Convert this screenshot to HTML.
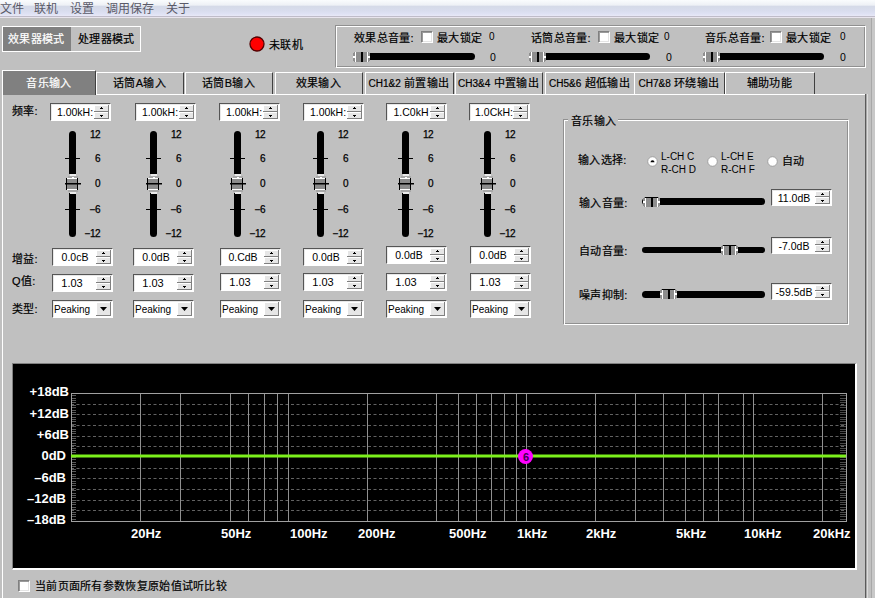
<!DOCTYPE html>
<html lang="zh-CN"><head><meta charset="utf-8"><title>EQ</title>
<style>
html,body{margin:0;padding:0;}
body{width:875px;height:598px;overflow:hidden;position:relative;background:#c0c0c0;font-family:"Liberation Sans",sans-serif;}
body>div,body>svg{position:absolute;}
.cj{font-size:11px;letter-spacing:0.3px;white-space:nowrap;line-height:13px;color:#000;-webkit-text-stroke:0.2px currentColor;}
.tab{text-align:center;}
.num{font-size:11px;white-space:nowrap;color:#000;}
.sm{font-size:10px;line-height:12px;}
.sc{font-size:10px;text-align:right;color:#000;line-height:12px;letter-spacing:-0.6px;-webkit-text-stroke:0.25px #000;}
.ch{font-size:13px;font-weight:bold;color:#fff;white-space:nowrap;line-height:15px;}
</style></head><body>
<div style="left:0px;top:0px;width:875px;height:16px;background:linear-gradient(#fafcfd 0px,#eef1f6 5px,#d5dae8 6.5px,#d9ddee 11px,#dfe2f4 14px,#e8e9f7 16px);"></div>
<div style="left:0px;top:16px;width:875px;height:1px;background:#bfbcc9;"></div>
<div style="left:0px;top:17px;width:875px;height:1px;background:#e9e5ee;"></div>
<div class="cj" style="left:0px;top:3px;font-size:12px;color:#5a5a68;letter-spacing:0;-webkit-text-stroke:0;">文件</div>
<div class="cj" style="left:34px;top:3px;font-size:12px;color:#5a5a68;letter-spacing:0;-webkit-text-stroke:0;">联机</div>
<div class="cj" style="left:70px;top:3px;font-size:12px;color:#5a5a68;letter-spacing:0;-webkit-text-stroke:0;">设置</div>
<div class="cj" style="left:106px;top:3px;font-size:12px;color:#5a5a68;letter-spacing:0;-webkit-text-stroke:0;">调用保存</div>
<div class="cj" style="left:166px;top:3px;font-size:12px;color:#5a5a68;letter-spacing:0;-webkit-text-stroke:0;">关于</div>
<div style="left:2px;top:26px;width:139px;height:26px;border:1px solid #fff;box-sizing:border-box;"></div>
<div style="left:3px;top:27px;width:68px;height:24px;background:#808080;"></div>
<div class="cj" style="left:8px;top:33px;font-size:11px;color:#fff;">效果器模式</div>
<div class="cj" style="left:78px;top:33px;font-size:11px;color:#000;">处理器模式</div>
<svg style="left:249px;top:36px" width="16" height="16"><circle cx="8" cy="8" r="7" fill="#ff0000" stroke="#500" stroke-width="1.3"/></svg>
<div class="cj" style="left:269px;top:39px;font-size:11px;color:#000;">未联机</div>
<div style="left:335px;top:25px;width:530px;height:42px;border:1px solid #909090;box-sizing:border-box;"></div>
<div style="left:336px;top:26px;width:530px;height:42px;border:1px solid #fff;box-sizing:border-box;"></div>
<div class="cj" style="left:354px;top:32px;font-size:11px;color:#000;">效果总音量:</div>
<div style="left:421px;top:31px;width:12px;height:12px;background:#fff;border-top:1px solid #808080;border-left:1px solid #808080;border-bottom:1px solid #fff;border-right:1px solid #fff;box-sizing:border-box;box-shadow:inset 1px 1px 0 #9a9a9a, inset -1px -1px 0 #e4e4e4;"></div>
<div class="cj" style="left:437px;top:32px;font-size:11px;color:#000;">最大锁定</div>
<div class="num" style="left:489px;top:31px;font-size:10px;line-height:12px">0</div>
<div style="left:364px;top:53px;width:111px;height:7px;background:#000;border-radius:3.5px;"></div>
<svg style="left:353px;top:52px" width="17" height="10">
<rect x="0" y="1" width="17" height="8" fill="#8e8e8e"/>
<rect x="1" y="0" width="15" height="10" fill="#8e8e8e"/>
<rect x="2" y="0" width="1" height="10" fill="#fff"/>
<rect x="14" y="0" width="1" height="10" fill="#fff"/>
<rect x="0" y="4" width="2" height="2" fill="#fff"/>
<rect x="15" y="4" width="2" height="2" fill="#fff"/>

<rect x="8" y="0" width="2" height="10" fill="#000"/>
</svg>
<div class="num" style="left:490px;top:51px;font-size:10.5px;line-height:12px">0</div>
<div class="cj" style="left:531px;top:32px;font-size:11px;color:#000;">话筒总音量:</div>
<div style="left:598px;top:31px;width:12px;height:12px;background:#fff;border-top:1px solid #808080;border-left:1px solid #808080;border-bottom:1px solid #fff;border-right:1px solid #fff;box-sizing:border-box;box-shadow:inset 1px 1px 0 #9a9a9a, inset -1px -1px 0 #e4e4e4;"></div>
<div class="cj" style="left:614px;top:32px;font-size:11px;color:#000;">最大锁定</div>
<div class="num" style="left:664px;top:31px;font-size:10px;line-height:12px">0</div>
<div style="left:540px;top:53px;width:110px;height:7px;background:#000;border-radius:3.5px;"></div>
<svg style="left:529px;top:52px" width="17" height="10">
<rect x="0" y="1" width="17" height="8" fill="#8e8e8e"/>
<rect x="1" y="0" width="15" height="10" fill="#8e8e8e"/>
<rect x="2" y="0" width="1" height="10" fill="#fff"/>
<rect x="14" y="0" width="1" height="10" fill="#fff"/>
<rect x="0" y="4" width="2" height="2" fill="#fff"/>
<rect x="15" y="4" width="2" height="2" fill="#fff"/>

<rect x="8" y="0" width="2" height="10" fill="#000"/>
</svg>
<div class="num" style="left:666px;top:51px;font-size:10.5px;line-height:12px">0</div>
<div class="cj" style="left:705px;top:32px;font-size:11px;color:#000;">音乐总音量:</div>
<div style="left:770px;top:31px;width:12px;height:12px;background:#fff;border-top:1px solid #808080;border-left:1px solid #808080;border-bottom:1px solid #fff;border-right:1px solid #fff;box-sizing:border-box;box-shadow:inset 1px 1px 0 #9a9a9a, inset -1px -1px 0 #e4e4e4;"></div>
<div class="cj" style="left:786px;top:32px;font-size:11px;color:#000;">最大锁定</div>
<div class="num" style="left:840px;top:31px;font-size:10px;line-height:12px">0</div>
<div style="left:714px;top:53px;width:110px;height:7px;background:#000;border-radius:3.5px;"></div>
<svg style="left:703px;top:52px" width="17" height="10">
<rect x="0" y="1" width="17" height="8" fill="#8e8e8e"/>
<rect x="1" y="0" width="15" height="10" fill="#8e8e8e"/>
<rect x="2" y="0" width="1" height="10" fill="#fff"/>
<rect x="14" y="0" width="1" height="10" fill="#fff"/>
<rect x="0" y="4" width="2" height="2" fill="#fff"/>
<rect x="15" y="4" width="2" height="2" fill="#fff"/>

<rect x="8" y="0" width="2" height="10" fill="#000"/>
</svg>
<div class="num" style="left:840px;top:51px;font-size:10.5px;line-height:12px">0</div>
<div style="left:2px;top:94px;width:864px;height:504px;border-top:1px solid #fff;border-left:1px solid #fff;border-right:1px solid #808080;box-sizing:border-box;"></div>
<div style="left:865px;top:94px;width:1px;height:504px;background:#5a5a5a;"></div>
<div style="left:866px;top:94px;width:1px;height:504px;background:#a8a8a8;"></div>
<div style="left:867px;top:94px;width:1px;height:504px;background:#dcdcdc;"></div>
<div style="left:871px;top:18px;width:1px;height:580px;background:#a8a8a8;"></div>
<div style="left:872px;top:18px;width:3px;height:580px;background:#c8c8c8;"></div>
<div style="left:2px;top:70px;width:94px;height:25px;border-top:1px solid #fff;border-left:1px solid #fff;border-right:1px solid #404040;box-sizing:border-box;background:#808080;"></div>
<div class="cj tab" style="left:3px;top:77px;width:92px;color:#fff">音乐输入</div>
<div style="left:96px;top:72px;width:88px;height:22px;border-top:1px solid #fff;border-left:1px solid #fff;border-right:1px solid #404040;box-sizing:border-box;"></div>
<div class="cj tab" style="left:96px;top:77px;width:87px;">话筒A输入</div>
<div style="left:185px;top:72px;width:88px;height:22px;border-top:1px solid #fff;border-left:1px solid #fff;border-right:1px solid #404040;box-sizing:border-box;"></div>
<div class="cj tab" style="left:185px;top:77px;width:87px;">话筒B输入</div>
<div style="left:275px;top:72px;width:88px;height:22px;border-top:1px solid #fff;border-left:1px solid #fff;border-right:1px solid #404040;box-sizing:border-box;"></div>
<div class="cj tab" style="left:275px;top:77px;width:87px;">效果输入</div>
<div style="left:365px;top:72px;width:89px;height:22px;border-top:1px solid #fff;border-left:1px solid #fff;border-right:1px solid #404040;box-sizing:border-box;"></div>
<div class="cj tab" style="left:365px;top:77px;width:88px;"><span style="font-size:10px;letter-spacing:0">CH1&amp;2</span> 前置输出</div>
<div style="left:455px;top:72px;width:88px;height:22px;border-top:1px solid #fff;border-left:1px solid #fff;border-right:1px solid #404040;box-sizing:border-box;"></div>
<div class="cj tab" style="left:455px;top:77px;width:87px;"><span style="font-size:10px;letter-spacing:0">CH3&amp;4</span> 中置输出</div>
<div style="left:545px;top:72px;width:90px;height:22px;border-top:1px solid #fff;border-left:1px solid #fff;border-right:1px solid #404040;box-sizing:border-box;"></div>
<div class="cj tab" style="left:545px;top:77px;width:89px;"><span style="font-size:10px;letter-spacing:0">CH5&amp;6</span> 超低输出</div>
<div style="left:634px;top:72px;width:91px;height:22px;border-top:1px solid #fff;border-left:1px solid #fff;border-right:1px solid #404040;box-sizing:border-box;"></div>
<div class="cj tab" style="left:634px;top:77px;width:90px;"><span style="font-size:10px;letter-spacing:0">CH7&amp;8</span> 环绕输出</div>
<div style="left:725px;top:72px;width:90px;height:22px;border-top:1px solid #fff;border-left:1px solid #fff;border-right:1px solid #404040;box-sizing:border-box;"></div>
<div class="cj tab" style="left:725px;top:77px;width:89px;">辅助功能</div>
<div class="cj" style="left:12px;top:105px;font-size:11px;color:#000;">频率:</div>
<div class="cj" style="left:12px;top:253px;font-size:11px;color:#000;">增益:</div>
<div class="cj" style="left:12px;top:275px;font-size:11px;color:#000;">Q值:</div>
<div class="cj" style="left:12px;top:303px;font-size:11px;color:#000;">类型:</div>
<div style="left:50px;top:103px;width:61px;height:18px;background:#fff;border-top:1px solid #555;border-left:1px solid #555;border-bottom:1px solid #fff;border-right:1px solid #fff;box-sizing:border-box;box-shadow:inset 1px 1px 0 #e8e8e8;"></div>
<div style="left:94px;top:105px;width:15px;height:7px;background:#e6e6e6;border-right:1px solid #808080;border-bottom:1px solid #808080;box-sizing:border-box;box-shadow:inset 1px 1px 0 #fff;"></div>
<div style="left:94px;top:112px;width:15px;height:7px;background:#e6e6e6;border-right:1px solid #808080;border-bottom:1px solid #808080;box-sizing:border-box;box-shadow:inset 1px 1px 0 #fff;"></div>
<svg style="left:100px;top:107px" width="3" height="2"><path d="M1 0H2V1H3V2H0V1H1Z" fill="#000"/></svg>
<svg style="left:100px;top:115px" width="3" height="2"><path d="M0 0H3V1H2V2H1V1H0Z" fill="#000"/></svg>
<div class="num" style="left:54px;top:103px;width:42px;height:18px;line-height:18px;text-align:center;font-size:10.5px">1.00kH:</div>
<div style="left:69px;top:131px;width:7px;height:43px;background:#000;border-radius:3.5px 3.5px 0 0;"></div>
<div style="left:69px;top:193px;width:7px;height:44px;background:#000;border-radius:0 0 3.5px 3.5px;"></div>
<div style="left:65px;top:158px;width:15px;height:1px;background:#000;"></div>
<div style="left:65px;top:209px;width:15px;height:1px;background:#000;"></div>
<svg style="left:65px;top:173px" width="16" height="21">
<rect x="5" y="1" width="6" height="2" fill="#ececec"/>
<rect x="3" y="3" width="10" height="2" fill="#a8a8a8"/>
<rect x="2" y="5" width="11" height="12" fill="#8c8c8c"/>
<rect x="2" y="5" width="11" height="1" fill="#fff"/>
<rect x="7" y="4" width="2" height="1" fill="#fff"/>
<rect x="2" y="16" width="11" height="1" fill="#fff"/>
<rect x="7" y="17" width="2" height="1" fill="#fff"/>
<rect x="1" y="5" width="1" height="12" fill="#000"/>
<rect x="12" y="5" width="1" height="12" fill="#000"/>
<rect x="0" y="10" width="16" height="1.5" fill="#000"/>
<rect x="3" y="17" width="10" height="2" fill="#a8a8a8"/>
<rect x="5" y="19" width="6" height="2" fill="#ececec"/>
</svg>
<div class="sc" style="left:70px;top:129px;width:30px">12</div>
<div class="sc" style="left:70px;top:153px;width:30px">6</div>
<div class="sc" style="left:70px;top:178px;width:30px">0</div>
<div class="sc" style="left:70px;top:204px;width:30px">&#8722;6</div>
<div class="sc" style="left:70px;top:228px;width:30px">&#8722;12</div>
<div style="left:52px;top:248px;width:61px;height:18px;background:#fff;border-top:1px solid #555;border-left:1px solid #555;border-bottom:1px solid #fff;border-right:1px solid #fff;box-sizing:border-box;box-shadow:inset 1px 1px 0 #e8e8e8;"></div>
<div style="left:96px;top:250px;width:15px;height:7px;background:#e6e6e6;border-right:1px solid #808080;border-bottom:1px solid #808080;box-sizing:border-box;box-shadow:inset 1px 1px 0 #fff;"></div>
<div style="left:96px;top:257px;width:15px;height:7px;background:#e6e6e6;border-right:1px solid #808080;border-bottom:1px solid #808080;box-sizing:border-box;box-shadow:inset 1px 1px 0 #fff;"></div>
<svg style="left:102px;top:252px" width="3" height="2"><path d="M1 0H2V1H3V2H0V1H1Z" fill="#000"/></svg>
<svg style="left:102px;top:260px" width="3" height="2"><path d="M0 0H3V1H2V2H1V1H0Z" fill="#000"/></svg>
<div class="num" style="left:54px;top:248px;width:42px;height:18px;line-height:18px;text-align:center;font-size:10.5px">0.0cB</div>
<div style="left:52px;top:274px;width:61px;height:18px;background:#fff;border-top:1px solid #555;border-left:1px solid #555;border-bottom:1px solid #fff;border-right:1px solid #fff;box-sizing:border-box;box-shadow:inset 1px 1px 0 #e8e8e8;"></div>
<div style="left:96px;top:276px;width:15px;height:7px;background:#e6e6e6;border-right:1px solid #808080;border-bottom:1px solid #808080;box-sizing:border-box;box-shadow:inset 1px 1px 0 #fff;"></div>
<div style="left:96px;top:283px;width:15px;height:7px;background:#e6e6e6;border-right:1px solid #808080;border-bottom:1px solid #808080;box-sizing:border-box;box-shadow:inset 1px 1px 0 #fff;"></div>
<svg style="left:102px;top:278px" width="3" height="2"><path d="M1 0H2V1H3V2H0V1H1Z" fill="#000"/></svg>
<svg style="left:102px;top:286px" width="3" height="2"><path d="M0 0H3V1H2V2H1V1H0Z" fill="#000"/></svg>
<div class="num" style="left:51px;top:274px;width:42px;height:18px;line-height:18px;text-align:center;font-size:11px">1.03</div>
<div style="left:52px;top:300px;width:61px;height:18px;background:#fff;border-top:1px solid #555;border-left:1px solid #555;border-bottom:1px solid #fff;border-right:1px solid #fff;box-sizing:border-box;box-shadow:inset 1px 1px 0 #e8e8e8;"></div>
<div style="left:96px;top:302px;width:15px;height:14px;background:#e6e6e6;border-right:1px solid #808080;border-bottom:1px solid #808080;box-sizing:border-box;box-shadow:inset 1px 1px 0 #fff;"></div>
<svg style="left:100px;top:307px" width="7" height="4"><path d="M0 0H7L3.5 4Z" fill="#000"/></svg>
<div class="num" style="left:54px;top:301px;width:42px;height:18px;line-height:18px;text-align:left;font-size:10px;overflow:hidden">Peaking</div>
<div style="left:135px;top:103px;width:61px;height:18px;background:#fff;border-top:1px solid #555;border-left:1px solid #555;border-bottom:1px solid #fff;border-right:1px solid #fff;box-sizing:border-box;box-shadow:inset 1px 1px 0 #e8e8e8;"></div>
<div style="left:179px;top:105px;width:15px;height:7px;background:#e6e6e6;border-right:1px solid #808080;border-bottom:1px solid #808080;box-sizing:border-box;box-shadow:inset 1px 1px 0 #fff;"></div>
<div style="left:179px;top:112px;width:15px;height:7px;background:#e6e6e6;border-right:1px solid #808080;border-bottom:1px solid #808080;box-sizing:border-box;box-shadow:inset 1px 1px 0 #fff;"></div>
<svg style="left:185px;top:107px" width="3" height="2"><path d="M1 0H2V1H3V2H0V1H1Z" fill="#000"/></svg>
<svg style="left:185px;top:115px" width="3" height="2"><path d="M0 0H3V1H2V2H1V1H0Z" fill="#000"/></svg>
<div class="num" style="left:139px;top:103px;width:42px;height:18px;line-height:18px;text-align:center;font-size:10.5px">1.00kH:</div>
<div style="left:150px;top:131px;width:7px;height:43px;background:#000;border-radius:3.5px 3.5px 0 0;"></div>
<div style="left:150px;top:193px;width:7px;height:44px;background:#000;border-radius:0 0 3.5px 3.5px;"></div>
<div style="left:146px;top:158px;width:15px;height:1px;background:#000;"></div>
<div style="left:146px;top:209px;width:15px;height:1px;background:#000;"></div>
<svg style="left:146px;top:173px" width="16" height="21">
<rect x="5" y="1" width="6" height="2" fill="#ececec"/>
<rect x="3" y="3" width="10" height="2" fill="#a8a8a8"/>
<rect x="2" y="5" width="11" height="12" fill="#8c8c8c"/>
<rect x="2" y="5" width="11" height="1" fill="#fff"/>
<rect x="7" y="4" width="2" height="1" fill="#fff"/>
<rect x="2" y="16" width="11" height="1" fill="#fff"/>
<rect x="7" y="17" width="2" height="1" fill="#fff"/>
<rect x="1" y="5" width="1" height="12" fill="#000"/>
<rect x="12" y="5" width="1" height="12" fill="#000"/>
<rect x="0" y="10" width="16" height="1.5" fill="#000"/>
<rect x="3" y="17" width="10" height="2" fill="#a8a8a8"/>
<rect x="5" y="19" width="6" height="2" fill="#ececec"/>
</svg>
<div class="sc" style="left:151px;top:129px;width:30px">12</div>
<div class="sc" style="left:151px;top:153px;width:30px">6</div>
<div class="sc" style="left:151px;top:178px;width:30px">0</div>
<div class="sc" style="left:151px;top:204px;width:30px">&#8722;6</div>
<div class="sc" style="left:151px;top:228px;width:30px">&#8722;12</div>
<div style="left:133px;top:248px;width:61px;height:18px;background:#fff;border-top:1px solid #555;border-left:1px solid #555;border-bottom:1px solid #fff;border-right:1px solid #fff;box-sizing:border-box;box-shadow:inset 1px 1px 0 #e8e8e8;"></div>
<div style="left:177px;top:250px;width:15px;height:7px;background:#e6e6e6;border-right:1px solid #808080;border-bottom:1px solid #808080;box-sizing:border-box;box-shadow:inset 1px 1px 0 #fff;"></div>
<div style="left:177px;top:257px;width:15px;height:7px;background:#e6e6e6;border-right:1px solid #808080;border-bottom:1px solid #808080;box-sizing:border-box;box-shadow:inset 1px 1px 0 #fff;"></div>
<svg style="left:183px;top:252px" width="3" height="2"><path d="M1 0H2V1H3V2H0V1H1Z" fill="#000"/></svg>
<svg style="left:183px;top:260px" width="3" height="2"><path d="M0 0H3V1H2V2H1V1H0Z" fill="#000"/></svg>
<div class="num" style="left:135px;top:248px;width:42px;height:18px;line-height:18px;text-align:center;font-size:10.5px">0.0dB</div>
<div style="left:133px;top:274px;width:61px;height:18px;background:#fff;border-top:1px solid #555;border-left:1px solid #555;border-bottom:1px solid #fff;border-right:1px solid #fff;box-sizing:border-box;box-shadow:inset 1px 1px 0 #e8e8e8;"></div>
<div style="left:177px;top:276px;width:15px;height:7px;background:#e6e6e6;border-right:1px solid #808080;border-bottom:1px solid #808080;box-sizing:border-box;box-shadow:inset 1px 1px 0 #fff;"></div>
<div style="left:177px;top:283px;width:15px;height:7px;background:#e6e6e6;border-right:1px solid #808080;border-bottom:1px solid #808080;box-sizing:border-box;box-shadow:inset 1px 1px 0 #fff;"></div>
<svg style="left:183px;top:278px" width="3" height="2"><path d="M1 0H2V1H3V2H0V1H1Z" fill="#000"/></svg>
<svg style="left:183px;top:286px" width="3" height="2"><path d="M0 0H3V1H2V2H1V1H0Z" fill="#000"/></svg>
<div class="num" style="left:132px;top:274px;width:42px;height:18px;line-height:18px;text-align:center;font-size:11px">1.03</div>
<div style="left:133px;top:300px;width:61px;height:18px;background:#fff;border-top:1px solid #555;border-left:1px solid #555;border-bottom:1px solid #fff;border-right:1px solid #fff;box-sizing:border-box;box-shadow:inset 1px 1px 0 #e8e8e8;"></div>
<div style="left:177px;top:302px;width:15px;height:14px;background:#e6e6e6;border-right:1px solid #808080;border-bottom:1px solid #808080;box-sizing:border-box;box-shadow:inset 1px 1px 0 #fff;"></div>
<svg style="left:181px;top:307px" width="7" height="4"><path d="M0 0H7L3.5 4Z" fill="#000"/></svg>
<div class="num" style="left:135px;top:301px;width:42px;height:18px;line-height:18px;text-align:left;font-size:10px;overflow:hidden">Peaking</div>
<div style="left:219px;top:103px;width:61px;height:18px;background:#fff;border-top:1px solid #555;border-left:1px solid #555;border-bottom:1px solid #fff;border-right:1px solid #fff;box-sizing:border-box;box-shadow:inset 1px 1px 0 #e8e8e8;"></div>
<div style="left:263px;top:105px;width:15px;height:7px;background:#e6e6e6;border-right:1px solid #808080;border-bottom:1px solid #808080;box-sizing:border-box;box-shadow:inset 1px 1px 0 #fff;"></div>
<div style="left:263px;top:112px;width:15px;height:7px;background:#e6e6e6;border-right:1px solid #808080;border-bottom:1px solid #808080;box-sizing:border-box;box-shadow:inset 1px 1px 0 #fff;"></div>
<svg style="left:269px;top:107px" width="3" height="2"><path d="M1 0H2V1H3V2H0V1H1Z" fill="#000"/></svg>
<svg style="left:269px;top:115px" width="3" height="2"><path d="M0 0H3V1H2V2H1V1H0Z" fill="#000"/></svg>
<div class="num" style="left:223px;top:103px;width:42px;height:18px;line-height:18px;text-align:center;font-size:10.5px">1.00kH:</div>
<div style="left:234px;top:131px;width:7px;height:43px;background:#000;border-radius:3.5px 3.5px 0 0;"></div>
<div style="left:234px;top:193px;width:7px;height:44px;background:#000;border-radius:0 0 3.5px 3.5px;"></div>
<div style="left:230px;top:158px;width:15px;height:1px;background:#000;"></div>
<div style="left:230px;top:209px;width:15px;height:1px;background:#000;"></div>
<svg style="left:230px;top:173px" width="16" height="21">
<rect x="5" y="1" width="6" height="2" fill="#ececec"/>
<rect x="3" y="3" width="10" height="2" fill="#a8a8a8"/>
<rect x="2" y="5" width="11" height="12" fill="#8c8c8c"/>
<rect x="2" y="5" width="11" height="1" fill="#fff"/>
<rect x="7" y="4" width="2" height="1" fill="#fff"/>
<rect x="2" y="16" width="11" height="1" fill="#fff"/>
<rect x="7" y="17" width="2" height="1" fill="#fff"/>
<rect x="1" y="5" width="1" height="12" fill="#000"/>
<rect x="12" y="5" width="1" height="12" fill="#000"/>
<rect x="0" y="10" width="16" height="1.5" fill="#000"/>
<rect x="3" y="17" width="10" height="2" fill="#a8a8a8"/>
<rect x="5" y="19" width="6" height="2" fill="#ececec"/>
</svg>
<div class="sc" style="left:235px;top:129px;width:30px">12</div>
<div class="sc" style="left:235px;top:153px;width:30px">6</div>
<div class="sc" style="left:235px;top:178px;width:30px">0</div>
<div class="sc" style="left:235px;top:204px;width:30px">&#8722;6</div>
<div class="sc" style="left:235px;top:228px;width:30px">&#8722;12</div>
<div style="left:220px;top:248px;width:61px;height:18px;background:#fff;border-top:1px solid #555;border-left:1px solid #555;border-bottom:1px solid #fff;border-right:1px solid #fff;box-sizing:border-box;box-shadow:inset 1px 1px 0 #e8e8e8;"></div>
<div style="left:264px;top:250px;width:15px;height:7px;background:#e6e6e6;border-right:1px solid #808080;border-bottom:1px solid #808080;box-sizing:border-box;box-shadow:inset 1px 1px 0 #fff;"></div>
<div style="left:264px;top:257px;width:15px;height:7px;background:#e6e6e6;border-right:1px solid #808080;border-bottom:1px solid #808080;box-sizing:border-box;box-shadow:inset 1px 1px 0 #fff;"></div>
<svg style="left:270px;top:252px" width="3" height="2"><path d="M1 0H2V1H3V2H0V1H1Z" fill="#000"/></svg>
<svg style="left:270px;top:260px" width="3" height="2"><path d="M0 0H3V1H2V2H1V1H0Z" fill="#000"/></svg>
<div class="num" style="left:222px;top:248px;width:42px;height:18px;line-height:18px;text-align:center;font-size:10.5px">0.CdB</div>
<div style="left:220px;top:273px;width:61px;height:18px;background:#fff;border-top:1px solid #555;border-left:1px solid #555;border-bottom:1px solid #fff;border-right:1px solid #fff;box-sizing:border-box;box-shadow:inset 1px 1px 0 #e8e8e8;"></div>
<div style="left:264px;top:275px;width:15px;height:7px;background:#e6e6e6;border-right:1px solid #808080;border-bottom:1px solid #808080;box-sizing:border-box;box-shadow:inset 1px 1px 0 #fff;"></div>
<div style="left:264px;top:282px;width:15px;height:7px;background:#e6e6e6;border-right:1px solid #808080;border-bottom:1px solid #808080;box-sizing:border-box;box-shadow:inset 1px 1px 0 #fff;"></div>
<svg style="left:270px;top:277px" width="3" height="2"><path d="M1 0H2V1H3V2H0V1H1Z" fill="#000"/></svg>
<svg style="left:270px;top:285px" width="3" height="2"><path d="M0 0H3V1H2V2H1V1H0Z" fill="#000"/></svg>
<div class="num" style="left:219px;top:273px;width:42px;height:18px;line-height:18px;text-align:center;font-size:11px">1.03</div>
<div style="left:220px;top:300px;width:61px;height:18px;background:#fff;border-top:1px solid #555;border-left:1px solid #555;border-bottom:1px solid #fff;border-right:1px solid #fff;box-sizing:border-box;box-shadow:inset 1px 1px 0 #e8e8e8;"></div>
<div style="left:264px;top:302px;width:15px;height:14px;background:#e6e6e6;border-right:1px solid #808080;border-bottom:1px solid #808080;box-sizing:border-box;box-shadow:inset 1px 1px 0 #fff;"></div>
<svg style="left:268px;top:307px" width="7" height="4"><path d="M0 0H7L3.5 4Z" fill="#000"/></svg>
<div class="num" style="left:222px;top:301px;width:42px;height:18px;line-height:18px;text-align:left;font-size:10px;overflow:hidden">Peaking</div>
<div style="left:303px;top:103px;width:61px;height:18px;background:#fff;border-top:1px solid #555;border-left:1px solid #555;border-bottom:1px solid #fff;border-right:1px solid #fff;box-sizing:border-box;box-shadow:inset 1px 1px 0 #e8e8e8;"></div>
<div style="left:347px;top:105px;width:15px;height:7px;background:#e6e6e6;border-right:1px solid #808080;border-bottom:1px solid #808080;box-sizing:border-box;box-shadow:inset 1px 1px 0 #fff;"></div>
<div style="left:347px;top:112px;width:15px;height:7px;background:#e6e6e6;border-right:1px solid #808080;border-bottom:1px solid #808080;box-sizing:border-box;box-shadow:inset 1px 1px 0 #fff;"></div>
<svg style="left:353px;top:107px" width="3" height="2"><path d="M1 0H2V1H3V2H0V1H1Z" fill="#000"/></svg>
<svg style="left:353px;top:115px" width="3" height="2"><path d="M0 0H3V1H2V2H1V1H0Z" fill="#000"/></svg>
<div class="num" style="left:307px;top:103px;width:42px;height:18px;line-height:18px;text-align:center;font-size:10.5px">1.00kH:</div>
<div style="left:317px;top:131px;width:7px;height:43px;background:#000;border-radius:3.5px 3.5px 0 0;"></div>
<div style="left:317px;top:193px;width:7px;height:44px;background:#000;border-radius:0 0 3.5px 3.5px;"></div>
<div style="left:313px;top:158px;width:15px;height:1px;background:#000;"></div>
<div style="left:313px;top:209px;width:15px;height:1px;background:#000;"></div>
<svg style="left:313px;top:173px" width="16" height="21">
<rect x="5" y="1" width="6" height="2" fill="#ececec"/>
<rect x="3" y="3" width="10" height="2" fill="#a8a8a8"/>
<rect x="2" y="5" width="11" height="12" fill="#8c8c8c"/>
<rect x="2" y="5" width="11" height="1" fill="#fff"/>
<rect x="7" y="4" width="2" height="1" fill="#fff"/>
<rect x="2" y="16" width="11" height="1" fill="#fff"/>
<rect x="7" y="17" width="2" height="1" fill="#fff"/>
<rect x="1" y="5" width="1" height="12" fill="#000"/>
<rect x="12" y="5" width="1" height="12" fill="#000"/>
<rect x="0" y="10" width="16" height="1.5" fill="#000"/>
<rect x="3" y="17" width="10" height="2" fill="#a8a8a8"/>
<rect x="5" y="19" width="6" height="2" fill="#ececec"/>
</svg>
<div class="sc" style="left:318px;top:129px;width:30px">12</div>
<div class="sc" style="left:318px;top:153px;width:30px">6</div>
<div class="sc" style="left:318px;top:178px;width:30px">0</div>
<div class="sc" style="left:318px;top:204px;width:30px">&#8722;6</div>
<div class="sc" style="left:318px;top:228px;width:30px">&#8722;12</div>
<div style="left:303px;top:248px;width:61px;height:18px;background:#fff;border-top:1px solid #555;border-left:1px solid #555;border-bottom:1px solid #fff;border-right:1px solid #fff;box-sizing:border-box;box-shadow:inset 1px 1px 0 #e8e8e8;"></div>
<div style="left:347px;top:250px;width:15px;height:7px;background:#e6e6e6;border-right:1px solid #808080;border-bottom:1px solid #808080;box-sizing:border-box;box-shadow:inset 1px 1px 0 #fff;"></div>
<div style="left:347px;top:257px;width:15px;height:7px;background:#e6e6e6;border-right:1px solid #808080;border-bottom:1px solid #808080;box-sizing:border-box;box-shadow:inset 1px 1px 0 #fff;"></div>
<svg style="left:353px;top:252px" width="3" height="2"><path d="M1 0H2V1H3V2H0V1H1Z" fill="#000"/></svg>
<svg style="left:353px;top:260px" width="3" height="2"><path d="M0 0H3V1H2V2H1V1H0Z" fill="#000"/></svg>
<div class="num" style="left:305px;top:248px;width:42px;height:18px;line-height:18px;text-align:center;font-size:10.5px">0.0dB</div>
<div style="left:303px;top:273px;width:61px;height:18px;background:#fff;border-top:1px solid #555;border-left:1px solid #555;border-bottom:1px solid #fff;border-right:1px solid #fff;box-sizing:border-box;box-shadow:inset 1px 1px 0 #e8e8e8;"></div>
<div style="left:347px;top:275px;width:15px;height:7px;background:#e6e6e6;border-right:1px solid #808080;border-bottom:1px solid #808080;box-sizing:border-box;box-shadow:inset 1px 1px 0 #fff;"></div>
<div style="left:347px;top:282px;width:15px;height:7px;background:#e6e6e6;border-right:1px solid #808080;border-bottom:1px solid #808080;box-sizing:border-box;box-shadow:inset 1px 1px 0 #fff;"></div>
<svg style="left:353px;top:277px" width="3" height="2"><path d="M1 0H2V1H3V2H0V1H1Z" fill="#000"/></svg>
<svg style="left:353px;top:285px" width="3" height="2"><path d="M0 0H3V1H2V2H1V1H0Z" fill="#000"/></svg>
<div class="num" style="left:302px;top:273px;width:42px;height:18px;line-height:18px;text-align:center;font-size:11px">1.03</div>
<div style="left:303px;top:300px;width:61px;height:18px;background:#fff;border-top:1px solid #555;border-left:1px solid #555;border-bottom:1px solid #fff;border-right:1px solid #fff;box-sizing:border-box;box-shadow:inset 1px 1px 0 #e8e8e8;"></div>
<div style="left:347px;top:302px;width:15px;height:14px;background:#e6e6e6;border-right:1px solid #808080;border-bottom:1px solid #808080;box-sizing:border-box;box-shadow:inset 1px 1px 0 #fff;"></div>
<svg style="left:351px;top:307px" width="7" height="4"><path d="M0 0H7L3.5 4Z" fill="#000"/></svg>
<div class="num" style="left:305px;top:301px;width:42px;height:18px;line-height:18px;text-align:left;font-size:10px;overflow:hidden">Peaking</div>
<div style="left:386px;top:103px;width:61px;height:18px;background:#fff;border-top:1px solid #555;border-left:1px solid #555;border-bottom:1px solid #fff;border-right:1px solid #fff;box-sizing:border-box;box-shadow:inset 1px 1px 0 #e8e8e8;"></div>
<div style="left:430px;top:105px;width:15px;height:7px;background:#e6e6e6;border-right:1px solid #808080;border-bottom:1px solid #808080;box-sizing:border-box;box-shadow:inset 1px 1px 0 #fff;"></div>
<div style="left:430px;top:112px;width:15px;height:7px;background:#e6e6e6;border-right:1px solid #808080;border-bottom:1px solid #808080;box-sizing:border-box;box-shadow:inset 1px 1px 0 #fff;"></div>
<svg style="left:436px;top:107px" width="3" height="2"><path d="M1 0H2V1H3V2H0V1H1Z" fill="#000"/></svg>
<svg style="left:436px;top:115px" width="3" height="2"><path d="M0 0H3V1H2V2H1V1H0Z" fill="#000"/></svg>
<div class="num" style="left:390px;top:103px;width:42px;height:18px;line-height:18px;text-align:center;font-size:10.5px">1.C0kH</div>
<div style="left:402px;top:131px;width:7px;height:43px;background:#000;border-radius:3.5px 3.5px 0 0;"></div>
<div style="left:402px;top:193px;width:7px;height:44px;background:#000;border-radius:0 0 3.5px 3.5px;"></div>
<div style="left:398px;top:158px;width:15px;height:1px;background:#000;"></div>
<div style="left:398px;top:209px;width:15px;height:1px;background:#000;"></div>
<svg style="left:398px;top:173px" width="16" height="21">
<rect x="5" y="1" width="6" height="2" fill="#ececec"/>
<rect x="3" y="3" width="10" height="2" fill="#a8a8a8"/>
<rect x="2" y="5" width="11" height="12" fill="#8c8c8c"/>
<rect x="2" y="5" width="11" height="1" fill="#fff"/>
<rect x="7" y="4" width="2" height="1" fill="#fff"/>
<rect x="2" y="16" width="11" height="1" fill="#fff"/>
<rect x="7" y="17" width="2" height="1" fill="#fff"/>
<rect x="1" y="5" width="1" height="12" fill="#000"/>
<rect x="12" y="5" width="1" height="12" fill="#000"/>
<rect x="0" y="10" width="16" height="1.5" fill="#000"/>
<rect x="3" y="17" width="10" height="2" fill="#a8a8a8"/>
<rect x="5" y="19" width="6" height="2" fill="#ececec"/>
</svg>
<div class="sc" style="left:403px;top:129px;width:30px">12</div>
<div class="sc" style="left:403px;top:153px;width:30px">6</div>
<div class="sc" style="left:403px;top:178px;width:30px">0</div>
<div class="sc" style="left:403px;top:204px;width:30px">&#8722;6</div>
<div class="sc" style="left:403px;top:228px;width:30px">&#8722;12</div>
<div style="left:386px;top:246px;width:61px;height:18px;background:#fff;border-top:1px solid #555;border-left:1px solid #555;border-bottom:1px solid #fff;border-right:1px solid #fff;box-sizing:border-box;box-shadow:inset 1px 1px 0 #e8e8e8;"></div>
<div style="left:430px;top:248px;width:15px;height:7px;background:#e6e6e6;border-right:1px solid #808080;border-bottom:1px solid #808080;box-sizing:border-box;box-shadow:inset 1px 1px 0 #fff;"></div>
<div style="left:430px;top:255px;width:15px;height:7px;background:#e6e6e6;border-right:1px solid #808080;border-bottom:1px solid #808080;box-sizing:border-box;box-shadow:inset 1px 1px 0 #fff;"></div>
<svg style="left:436px;top:250px" width="3" height="2"><path d="M1 0H2V1H3V2H0V1H1Z" fill="#000"/></svg>
<svg style="left:436px;top:258px" width="3" height="2"><path d="M0 0H3V1H2V2H1V1H0Z" fill="#000"/></svg>
<div class="num" style="left:388px;top:246px;width:42px;height:18px;line-height:18px;text-align:center;font-size:10.5px">0.0dB</div>
<div style="left:386px;top:273px;width:61px;height:18px;background:#fff;border-top:1px solid #555;border-left:1px solid #555;border-bottom:1px solid #fff;border-right:1px solid #fff;box-sizing:border-box;box-shadow:inset 1px 1px 0 #e8e8e8;"></div>
<div style="left:430px;top:275px;width:15px;height:7px;background:#e6e6e6;border-right:1px solid #808080;border-bottom:1px solid #808080;box-sizing:border-box;box-shadow:inset 1px 1px 0 #fff;"></div>
<div style="left:430px;top:282px;width:15px;height:7px;background:#e6e6e6;border-right:1px solid #808080;border-bottom:1px solid #808080;box-sizing:border-box;box-shadow:inset 1px 1px 0 #fff;"></div>
<svg style="left:436px;top:277px" width="3" height="2"><path d="M1 0H2V1H3V2H0V1H1Z" fill="#000"/></svg>
<svg style="left:436px;top:285px" width="3" height="2"><path d="M0 0H3V1H2V2H1V1H0Z" fill="#000"/></svg>
<div class="num" style="left:385px;top:273px;width:42px;height:18px;line-height:18px;text-align:center;font-size:11px">1.03</div>
<div style="left:386px;top:300px;width:61px;height:18px;background:#fff;border-top:1px solid #555;border-left:1px solid #555;border-bottom:1px solid #fff;border-right:1px solid #fff;box-sizing:border-box;box-shadow:inset 1px 1px 0 #e8e8e8;"></div>
<div style="left:430px;top:302px;width:15px;height:14px;background:#e6e6e6;border-right:1px solid #808080;border-bottom:1px solid #808080;box-sizing:border-box;box-shadow:inset 1px 1px 0 #fff;"></div>
<svg style="left:434px;top:307px" width="7" height="4"><path d="M0 0H7L3.5 4Z" fill="#000"/></svg>
<div class="num" style="left:388px;top:301px;width:42px;height:18px;line-height:18px;text-align:left;font-size:10px;overflow:hidden">Peaking</div>
<div style="left:469px;top:103px;width:61px;height:18px;background:#fff;border-top:1px solid #555;border-left:1px solid #555;border-bottom:1px solid #fff;border-right:1px solid #fff;box-sizing:border-box;box-shadow:inset 1px 1px 0 #e8e8e8;"></div>
<div style="left:513px;top:105px;width:15px;height:7px;background:#e6e6e6;border-right:1px solid #808080;border-bottom:1px solid #808080;box-sizing:border-box;box-shadow:inset 1px 1px 0 #fff;"></div>
<div style="left:513px;top:112px;width:15px;height:7px;background:#e6e6e6;border-right:1px solid #808080;border-bottom:1px solid #808080;box-sizing:border-box;box-shadow:inset 1px 1px 0 #fff;"></div>
<svg style="left:519px;top:107px" width="3" height="2"><path d="M1 0H2V1H3V2H0V1H1Z" fill="#000"/></svg>
<svg style="left:519px;top:115px" width="3" height="2"><path d="M0 0H3V1H2V2H1V1H0Z" fill="#000"/></svg>
<div class="num" style="left:473px;top:103px;width:42px;height:18px;line-height:18px;text-align:center;font-size:10.5px">1.0CkH:</div>
<div style="left:484px;top:131px;width:7px;height:43px;background:#000;border-radius:3.5px 3.5px 0 0;"></div>
<div style="left:484px;top:193px;width:7px;height:44px;background:#000;border-radius:0 0 3.5px 3.5px;"></div>
<div style="left:480px;top:158px;width:15px;height:1px;background:#000;"></div>
<div style="left:480px;top:209px;width:15px;height:1px;background:#000;"></div>
<svg style="left:480px;top:173px" width="16" height="21">
<rect x="5" y="1" width="6" height="2" fill="#ececec"/>
<rect x="3" y="3" width="10" height="2" fill="#a8a8a8"/>
<rect x="2" y="5" width="11" height="12" fill="#8c8c8c"/>
<rect x="2" y="5" width="11" height="1" fill="#fff"/>
<rect x="7" y="4" width="2" height="1" fill="#fff"/>
<rect x="2" y="16" width="11" height="1" fill="#fff"/>
<rect x="7" y="17" width="2" height="1" fill="#fff"/>
<rect x="1" y="5" width="1" height="12" fill="#000"/>
<rect x="12" y="5" width="1" height="12" fill="#000"/>
<rect x="0" y="10" width="16" height="1.5" fill="#000"/>
<rect x="3" y="17" width="10" height="2" fill="#a8a8a8"/>
<rect x="5" y="19" width="6" height="2" fill="#ececec"/>
</svg>
<div class="sc" style="left:485px;top:129px;width:30px">12</div>
<div class="sc" style="left:485px;top:153px;width:30px">6</div>
<div class="sc" style="left:485px;top:178px;width:30px">0</div>
<div class="sc" style="left:485px;top:204px;width:30px">&#8722;6</div>
<div class="sc" style="left:485px;top:228px;width:30px">&#8722;12</div>
<div style="left:470px;top:246px;width:61px;height:18px;background:#fff;border-top:1px solid #555;border-left:1px solid #555;border-bottom:1px solid #fff;border-right:1px solid #fff;box-sizing:border-box;box-shadow:inset 1px 1px 0 #e8e8e8;"></div>
<div style="left:514px;top:248px;width:15px;height:7px;background:#e6e6e6;border-right:1px solid #808080;border-bottom:1px solid #808080;box-sizing:border-box;box-shadow:inset 1px 1px 0 #fff;"></div>
<div style="left:514px;top:255px;width:15px;height:7px;background:#e6e6e6;border-right:1px solid #808080;border-bottom:1px solid #808080;box-sizing:border-box;box-shadow:inset 1px 1px 0 #fff;"></div>
<svg style="left:520px;top:250px" width="3" height="2"><path d="M1 0H2V1H3V2H0V1H1Z" fill="#000"/></svg>
<svg style="left:520px;top:258px" width="3" height="2"><path d="M0 0H3V1H2V2H1V1H0Z" fill="#000"/></svg>
<div class="num" style="left:472px;top:246px;width:42px;height:18px;line-height:18px;text-align:center;font-size:10.5px">0.0dB</div>
<div style="left:470px;top:273px;width:61px;height:18px;background:#fff;border-top:1px solid #555;border-left:1px solid #555;border-bottom:1px solid #fff;border-right:1px solid #fff;box-sizing:border-box;box-shadow:inset 1px 1px 0 #e8e8e8;"></div>
<div style="left:514px;top:275px;width:15px;height:7px;background:#e6e6e6;border-right:1px solid #808080;border-bottom:1px solid #808080;box-sizing:border-box;box-shadow:inset 1px 1px 0 #fff;"></div>
<div style="left:514px;top:282px;width:15px;height:7px;background:#e6e6e6;border-right:1px solid #808080;border-bottom:1px solid #808080;box-sizing:border-box;box-shadow:inset 1px 1px 0 #fff;"></div>
<svg style="left:520px;top:277px" width="3" height="2"><path d="M1 0H2V1H3V2H0V1H1Z" fill="#000"/></svg>
<svg style="left:520px;top:285px" width="3" height="2"><path d="M0 0H3V1H2V2H1V1H0Z" fill="#000"/></svg>
<div class="num" style="left:469px;top:273px;width:42px;height:18px;line-height:18px;text-align:center;font-size:11px">1.03</div>
<div style="left:470px;top:300px;width:61px;height:18px;background:#fff;border-top:1px solid #555;border-left:1px solid #555;border-bottom:1px solid #fff;border-right:1px solid #fff;box-sizing:border-box;box-shadow:inset 1px 1px 0 #e8e8e8;"></div>
<div style="left:514px;top:302px;width:15px;height:14px;background:#e6e6e6;border-right:1px solid #808080;border-bottom:1px solid #808080;box-sizing:border-box;box-shadow:inset 1px 1px 0 #fff;"></div>
<svg style="left:518px;top:307px" width="7" height="4"><path d="M0 0H7L3.5 4Z" fill="#000"/></svg>
<div class="num" style="left:472px;top:301px;width:42px;height:18px;line-height:18px;text-align:left;font-size:10px;overflow:hidden">Peaking</div>
<div style="left:563px;top:119px;width:285px;height:205px;border:1px solid #909090;box-sizing:border-box;"></div>
<div style="left:564px;top:120px;width:285px;height:205px;border:1px solid #fff;box-sizing:border-box;"></div>
<div style="left:568px;top:113px;width:50px;height:12px;background:#c0c0c0;"></div>
<div class="cj" style="left:571px;top:115px;font-size:11px;color:#000;">音乐输入</div>
<div class="cj" style="left:578px;top:154px;font-size:11px;color:#000;">输入选择:</div>
<svg style="left:647px;top:156px" width="11" height="11"><circle cx="5.5" cy="5.5" r="4.8" fill="#fff" stroke="#9a9a9a" stroke-width="0.9"/><path d="M3.5 6.2A2 2 0 0 1 7.5 6.2Z" fill="#000"/></svg>
<div class="num sm" style="left:661px;top:150px;line-height:13px">L-CH C<br>R-CH D</div>
<svg style="left:707px;top:156px" width="11" height="11"><circle cx="5.5" cy="5.5" r="4.8" fill="#fff" stroke="#9a9a9a" stroke-width="0.9"/></svg>
<div class="num sm" style="left:721px;top:150px;line-height:13px">L-CH E<br>R-CH F</div>
<svg style="left:767px;top:156px" width="11" height="11"><circle cx="5.5" cy="5.5" r="4.8" fill="#fff" stroke="#9a9a9a" stroke-width="0.9"/></svg>
<div class="cj" style="left:782px;top:155px;font-size:11px;color:#000;">自动</div>
<div class="cj" style="left:579px;top:197px;font-size:11px;color:#000;">输入音量:</div>
<div style="left:642px;top:198px;width:123px;height:7px;background:#000;border-radius:3.5px;"></div>
<svg style="left:643px;top:197px" width="17" height="10">
<rect x="0" y="1" width="17" height="8" fill="#8e8e8e"/>
<rect x="1" y="0" width="15" height="10" fill="#8e8e8e"/>
<rect x="2" y="0" width="1" height="10" fill="#fff"/>
<rect x="14" y="0" width="1" height="10" fill="#fff"/>
<rect x="0" y="4" width="2" height="2" fill="#fff"/>
<rect x="15" y="4" width="2" height="2" fill="#fff"/>
<rect x="2" y="0" width="13" height="1" fill="#000"/>
<rect x="8" y="0" width="2" height="10" fill="#000"/>
</svg>
<div style="left:771px;top:189px;width:61px;height:17px;background:#fff;border-top:1px solid #555;border-left:1px solid #555;border-bottom:1px solid #fff;border-right:1px solid #fff;box-sizing:border-box;box-shadow:inset 1px 1px 0 #e8e8e8;"></div>
<div style="left:815px;top:191px;width:15px;height:6px;background:#e6e6e6;border-right:1px solid #808080;border-bottom:1px solid #808080;box-sizing:border-box;box-shadow:inset 1px 1px 0 #fff;"></div>
<div style="left:815px;top:197px;width:15px;height:7px;background:#e6e6e6;border-right:1px solid #808080;border-bottom:1px solid #808080;box-sizing:border-box;box-shadow:inset 1px 1px 0 #fff;"></div>
<svg style="left:821px;top:193px" width="3" height="2"><path d="M1 0H2V1H3V2H0V1H1Z" fill="#000"/></svg>
<svg style="left:821px;top:200px" width="3" height="2"><path d="M0 0H3V1H2V2H1V1H0Z" fill="#000"/></svg>
<div class="num" style="left:773px;top:190px;width:42px;height:17px;line-height:17px;text-align:center;font-size:10.5px">11.0dB</div>
<div class="cj" style="left:579px;top:245px;font-size:11px;color:#000;">自动音量:</div>
<div style="left:642px;top:247px;width:123px;height:6px;background:#000;border-radius:3.0px;"></div>
<svg style="left:721px;top:245px" width="17" height="10">
<rect x="0" y="1" width="17" height="8" fill="#8e8e8e"/>
<rect x="1" y="0" width="15" height="10" fill="#8e8e8e"/>
<rect x="2" y="0" width="1" height="10" fill="#fff"/>
<rect x="14" y="0" width="1" height="10" fill="#fff"/>
<rect x="0" y="4" width="2" height="2" fill="#fff"/>
<rect x="15" y="4" width="2" height="2" fill="#fff"/>
<rect x="2" y="0" width="13" height="1" fill="#000"/>
<rect x="8" y="0" width="2" height="10" fill="#000"/>
</svg>
<div style="left:771px;top:237px;width:61px;height:17px;background:#fff;border-top:1px solid #555;border-left:1px solid #555;border-bottom:1px solid #fff;border-right:1px solid #fff;box-sizing:border-box;box-shadow:inset 1px 1px 0 #e8e8e8;"></div>
<div style="left:815px;top:239px;width:15px;height:6px;background:#e6e6e6;border-right:1px solid #808080;border-bottom:1px solid #808080;box-sizing:border-box;box-shadow:inset 1px 1px 0 #fff;"></div>
<div style="left:815px;top:245px;width:15px;height:7px;background:#e6e6e6;border-right:1px solid #808080;border-bottom:1px solid #808080;box-sizing:border-box;box-shadow:inset 1px 1px 0 #fff;"></div>
<svg style="left:821px;top:241px" width="3" height="2"><path d="M1 0H2V1H3V2H0V1H1Z" fill="#000"/></svg>
<svg style="left:821px;top:248px" width="3" height="2"><path d="M0 0H3V1H2V2H1V1H0Z" fill="#000"/></svg>
<div class="num" style="left:773px;top:238px;width:42px;height:17px;line-height:17px;text-align:center;font-size:10.5px">-7.0dB</div>
<div class="cj" style="left:579px;top:289px;font-size:11px;color:#000;">噪声抑制:</div>
<div style="left:642px;top:291px;width:123px;height:7px;background:#000;border-radius:3.5px;"></div>
<svg style="left:660px;top:289px" width="17" height="10">
<rect x="0" y="1" width="17" height="8" fill="#8e8e8e"/>
<rect x="1" y="0" width="15" height="10" fill="#8e8e8e"/>
<rect x="2" y="0" width="1" height="10" fill="#fff"/>
<rect x="14" y="0" width="1" height="10" fill="#fff"/>
<rect x="0" y="4" width="2" height="2" fill="#fff"/>
<rect x="15" y="4" width="2" height="2" fill="#fff"/>
<rect x="2" y="0" width="13" height="1" fill="#000"/>
<rect x="8" y="0" width="2" height="10" fill="#000"/>
</svg>
<div style="left:771px;top:283px;width:61px;height:17px;background:#fff;border-top:1px solid #555;border-left:1px solid #555;border-bottom:1px solid #fff;border-right:1px solid #fff;box-sizing:border-box;box-shadow:inset 1px 1px 0 #e8e8e8;"></div>
<div style="left:815px;top:285px;width:15px;height:6px;background:#e6e6e6;border-right:1px solid #808080;border-bottom:1px solid #808080;box-sizing:border-box;box-shadow:inset 1px 1px 0 #fff;"></div>
<div style="left:815px;top:291px;width:15px;height:7px;background:#e6e6e6;border-right:1px solid #808080;border-bottom:1px solid #808080;box-sizing:border-box;box-shadow:inset 1px 1px 0 #fff;"></div>
<svg style="left:821px;top:287px" width="3" height="2"><path d="M1 0H2V1H3V2H0V1H1Z" fill="#000"/></svg>
<svg style="left:821px;top:294px" width="3" height="2"><path d="M0 0H3V1H2V2H1V1H0Z" fill="#000"/></svg>
<div class="num" style="left:773px;top:284px;width:42px;height:17px;line-height:17px;text-align:center;font-size:10.5px">-59.5dB</div>
<div style="left:12px;top:363px;width:845px;height:207px;background:#000;border-top:1px solid #808080;border-left:1px solid #808080;border-bottom:2px solid #fff;border-right:2px solid #fff;box-sizing:border-box;"></div>
<svg style="left:0px;top:0px" width="875" height="598">
<line x1="71" y1="404.5" x2="846" y2="404.5" stroke="#626262" stroke-width="1" stroke-dasharray="3 2.5"/>
<line x1="71" y1="414.5" x2="846" y2="414.5" stroke="#626262" stroke-width="1" stroke-dasharray="3 2.5"/>
<line x1="71" y1="425.5" x2="846" y2="425.5" stroke="#626262" stroke-width="1" stroke-dasharray="3 2.5"/>
<line x1="71" y1="436.5" x2="846" y2="436.5" stroke="#626262" stroke-width="1" stroke-dasharray="3 2.5"/>
<line x1="71" y1="446.5" x2="846" y2="446.5" stroke="#626262" stroke-width="1" stroke-dasharray="3 2.5"/>
<line x1="71" y1="468.5" x2="846" y2="468.5" stroke="#626262" stroke-width="1" stroke-dasharray="3 2.5"/>
<line x1="71" y1="478.5" x2="846" y2="478.5" stroke="#626262" stroke-width="1" stroke-dasharray="3 2.5"/>
<line x1="71" y1="489.5" x2="846" y2="489.5" stroke="#626262" stroke-width="1" stroke-dasharray="3 2.5"/>
<line x1="71" y1="500.5" x2="846" y2="500.5" stroke="#626262" stroke-width="1" stroke-dasharray="3 2.5"/>
<line x1="71" y1="510.5" x2="846" y2="510.5" stroke="#626262" stroke-width="1" stroke-dasharray="3 2.5"/>
<line x1="140.5" y1="393" x2="140.5" y2="521" stroke="#909090" stroke-width="1"/>
<line x1="180.5" y1="393" x2="180.5" y2="521" stroke="#909090" stroke-width="1"/>
<line x1="230.5" y1="393" x2="230.5" y2="521" stroke="#909090" stroke-width="1"/>
<line x1="248.5" y1="393" x2="248.5" y2="521" stroke="#909090" stroke-width="1"/>
<line x1="264.5" y1="393" x2="264.5" y2="521" stroke="#909090" stroke-width="1"/>
<line x1="277.5" y1="393" x2="277.5" y2="521" stroke="#909090" stroke-width="1"/>
<line x1="288.5" y1="393" x2="288.5" y2="521" stroke="#909090" stroke-width="1"/>
<line x1="367.5" y1="393" x2="367.5" y2="521" stroke="#909090" stroke-width="1"/>
<line x1="436.5" y1="393" x2="436.5" y2="521" stroke="#909090" stroke-width="1"/>
<line x1="458.5" y1="393" x2="458.5" y2="521" stroke="#909090" stroke-width="1"/>
<line x1="476.5" y1="393" x2="476.5" y2="521" stroke="#909090" stroke-width="1"/>
<line x1="491.5" y1="393" x2="491.5" y2="521" stroke="#909090" stroke-width="1"/>
<line x1="504.5" y1="393" x2="504.5" y2="521" stroke="#909090" stroke-width="1"/>
<line x1="516.5" y1="393" x2="516.5" y2="521" stroke="#909090" stroke-width="1"/>
<line x1="526.5" y1="393" x2="526.5" y2="521" stroke="#909090" stroke-width="1"/>
<line x1="595.5" y1="393" x2="595.5" y2="521" stroke="#909090" stroke-width="1"/>
<line x1="635.5" y1="393" x2="635.5" y2="521" stroke="#909090" stroke-width="1"/>
<line x1="663.5" y1="393" x2="663.5" y2="521" stroke="#909090" stroke-width="1"/>
<line x1="685.5" y1="393" x2="685.5" y2="521" stroke="#909090" stroke-width="1"/>
<line x1="703.5" y1="393" x2="703.5" y2="521" stroke="#909090" stroke-width="1"/>
<line x1="718.5" y1="393" x2="718.5" y2="521" stroke="#909090" stroke-width="1"/>
<line x1="743.5" y1="393" x2="743.5" y2="521" stroke="#909090" stroke-width="1"/>
<line x1="753.5" y1="393" x2="753.5" y2="521" stroke="#909090" stroke-width="1"/>
<line x1="822.5" y1="393" x2="822.5" y2="521" stroke="#909090" stroke-width="1"/>
<line x1="71" y1="393.5" x2="76" y2="393.5" stroke="#5a5a5a" stroke-width="1"/>
<line x1="840" y1="393.5" x2="846" y2="393.5" stroke="#4a4a4a" stroke-width="1"/>
<line x1="71" y1="395.5" x2="76" y2="395.5" stroke="#5a5a5a" stroke-width="1"/>
<line x1="840" y1="395.5" x2="846" y2="395.5" stroke="#4a4a4a" stroke-width="1"/>
<line x1="71" y1="398.5" x2="76" y2="398.5" stroke="#5a5a5a" stroke-width="1"/>
<line x1="840" y1="398.5" x2="846" y2="398.5" stroke="#4a4a4a" stroke-width="1"/>
<line x1="71" y1="400.5" x2="76" y2="400.5" stroke="#5a5a5a" stroke-width="1"/>
<line x1="840" y1="400.5" x2="846" y2="400.5" stroke="#4a4a4a" stroke-width="1"/>
<line x1="71" y1="402.5" x2="76" y2="402.5" stroke="#5a5a5a" stroke-width="1"/>
<line x1="840" y1="402.5" x2="846" y2="402.5" stroke="#4a4a4a" stroke-width="1"/>
<line x1="71" y1="405.5" x2="76" y2="405.5" stroke="#5a5a5a" stroke-width="1"/>
<line x1="840" y1="405.5" x2="846" y2="405.5" stroke="#4a4a4a" stroke-width="1"/>
<line x1="71" y1="407.5" x2="76" y2="407.5" stroke="#5a5a5a" stroke-width="1"/>
<line x1="840" y1="407.5" x2="846" y2="407.5" stroke="#4a4a4a" stroke-width="1"/>
<line x1="71" y1="410.5" x2="76" y2="410.5" stroke="#5a5a5a" stroke-width="1"/>
<line x1="840" y1="410.5" x2="846" y2="410.5" stroke="#4a4a4a" stroke-width="1"/>
<line x1="71" y1="412.5" x2="76" y2="412.5" stroke="#5a5a5a" stroke-width="1"/>
<line x1="840" y1="412.5" x2="846" y2="412.5" stroke="#4a4a4a" stroke-width="1"/>
<line x1="71" y1="414.5" x2="76" y2="414.5" stroke="#5a5a5a" stroke-width="1"/>
<line x1="840" y1="414.5" x2="846" y2="414.5" stroke="#4a4a4a" stroke-width="1"/>
<line x1="71" y1="417.5" x2="76" y2="417.5" stroke="#5a5a5a" stroke-width="1"/>
<line x1="840" y1="417.5" x2="846" y2="417.5" stroke="#4a4a4a" stroke-width="1"/>
<line x1="71" y1="419.5" x2="76" y2="419.5" stroke="#5a5a5a" stroke-width="1"/>
<line x1="840" y1="419.5" x2="846" y2="419.5" stroke="#4a4a4a" stroke-width="1"/>
<line x1="71" y1="421.5" x2="76" y2="421.5" stroke="#5a5a5a" stroke-width="1"/>
<line x1="840" y1="421.5" x2="846" y2="421.5" stroke="#4a4a4a" stroke-width="1"/>
<line x1="71" y1="424.5" x2="76" y2="424.5" stroke="#5a5a5a" stroke-width="1"/>
<line x1="840" y1="424.5" x2="846" y2="424.5" stroke="#4a4a4a" stroke-width="1"/>
<line x1="71" y1="426.5" x2="76" y2="426.5" stroke="#5a5a5a" stroke-width="1"/>
<line x1="840" y1="426.5" x2="846" y2="426.5" stroke="#4a4a4a" stroke-width="1"/>
<line x1="71" y1="429.5" x2="76" y2="429.5" stroke="#5a5a5a" stroke-width="1"/>
<line x1="840" y1="429.5" x2="846" y2="429.5" stroke="#4a4a4a" stroke-width="1"/>
<line x1="71" y1="431.5" x2="76" y2="431.5" stroke="#5a5a5a" stroke-width="1"/>
<line x1="840" y1="431.5" x2="846" y2="431.5" stroke="#4a4a4a" stroke-width="1"/>
<line x1="71" y1="433.5" x2="76" y2="433.5" stroke="#5a5a5a" stroke-width="1"/>
<line x1="840" y1="433.5" x2="846" y2="433.5" stroke="#4a4a4a" stroke-width="1"/>
<line x1="71" y1="436.5" x2="76" y2="436.5" stroke="#5a5a5a" stroke-width="1"/>
<line x1="840" y1="436.5" x2="846" y2="436.5" stroke="#4a4a4a" stroke-width="1"/>
<line x1="71" y1="438.5" x2="76" y2="438.5" stroke="#5a5a5a" stroke-width="1"/>
<line x1="840" y1="438.5" x2="846" y2="438.5" stroke="#4a4a4a" stroke-width="1"/>
<line x1="71" y1="440.5" x2="76" y2="440.5" stroke="#5a5a5a" stroke-width="1"/>
<line x1="840" y1="440.5" x2="846" y2="440.5" stroke="#4a4a4a" stroke-width="1"/>
<line x1="71" y1="443.5" x2="76" y2="443.5" stroke="#5a5a5a" stroke-width="1"/>
<line x1="840" y1="443.5" x2="846" y2="443.5" stroke="#4a4a4a" stroke-width="1"/>
<line x1="71" y1="445.5" x2="76" y2="445.5" stroke="#5a5a5a" stroke-width="1"/>
<line x1="840" y1="445.5" x2="846" y2="445.5" stroke="#4a4a4a" stroke-width="1"/>
<line x1="71" y1="448.5" x2="76" y2="448.5" stroke="#5a5a5a" stroke-width="1"/>
<line x1="840" y1="448.5" x2="846" y2="448.5" stroke="#4a4a4a" stroke-width="1"/>
<line x1="71" y1="450.5" x2="76" y2="450.5" stroke="#5a5a5a" stroke-width="1"/>
<line x1="840" y1="450.5" x2="846" y2="450.5" stroke="#4a4a4a" stroke-width="1"/>
<line x1="71" y1="452.5" x2="76" y2="452.5" stroke="#5a5a5a" stroke-width="1"/>
<line x1="840" y1="452.5" x2="846" y2="452.5" stroke="#4a4a4a" stroke-width="1"/>
<line x1="71" y1="455.5" x2="76" y2="455.5" stroke="#5a5a5a" stroke-width="1"/>
<line x1="840" y1="455.5" x2="846" y2="455.5" stroke="#4a4a4a" stroke-width="1"/>
<line x1="71" y1="457.5" x2="76" y2="457.5" stroke="#5a5a5a" stroke-width="1"/>
<line x1="840" y1="457.5" x2="846" y2="457.5" stroke="#4a4a4a" stroke-width="1"/>
<line x1="71" y1="459.5" x2="76" y2="459.5" stroke="#5a5a5a" stroke-width="1"/>
<line x1="840" y1="459.5" x2="846" y2="459.5" stroke="#4a4a4a" stroke-width="1"/>
<line x1="71" y1="462.5" x2="76" y2="462.5" stroke="#5a5a5a" stroke-width="1"/>
<line x1="840" y1="462.5" x2="846" y2="462.5" stroke="#4a4a4a" stroke-width="1"/>
<line x1="71" y1="464.5" x2="76" y2="464.5" stroke="#5a5a5a" stroke-width="1"/>
<line x1="840" y1="464.5" x2="846" y2="464.5" stroke="#4a4a4a" stroke-width="1"/>
<line x1="71" y1="466.5" x2="76" y2="466.5" stroke="#5a5a5a" stroke-width="1"/>
<line x1="840" y1="466.5" x2="846" y2="466.5" stroke="#4a4a4a" stroke-width="1"/>
<line x1="71" y1="469.5" x2="76" y2="469.5" stroke="#5a5a5a" stroke-width="1"/>
<line x1="840" y1="469.5" x2="846" y2="469.5" stroke="#4a4a4a" stroke-width="1"/>
<line x1="71" y1="471.5" x2="76" y2="471.5" stroke="#5a5a5a" stroke-width="1"/>
<line x1="840" y1="471.5" x2="846" y2="471.5" stroke="#4a4a4a" stroke-width="1"/>
<line x1="71" y1="474.5" x2="76" y2="474.5" stroke="#5a5a5a" stroke-width="1"/>
<line x1="840" y1="474.5" x2="846" y2="474.5" stroke="#4a4a4a" stroke-width="1"/>
<line x1="71" y1="476.5" x2="76" y2="476.5" stroke="#5a5a5a" stroke-width="1"/>
<line x1="840" y1="476.5" x2="846" y2="476.5" stroke="#4a4a4a" stroke-width="1"/>
<line x1="71" y1="478.5" x2="76" y2="478.5" stroke="#5a5a5a" stroke-width="1"/>
<line x1="840" y1="478.5" x2="846" y2="478.5" stroke="#4a4a4a" stroke-width="1"/>
<line x1="71" y1="481.5" x2="76" y2="481.5" stroke="#5a5a5a" stroke-width="1"/>
<line x1="840" y1="481.5" x2="846" y2="481.5" stroke="#4a4a4a" stroke-width="1"/>
<line x1="71" y1="483.5" x2="76" y2="483.5" stroke="#5a5a5a" stroke-width="1"/>
<line x1="840" y1="483.5" x2="846" y2="483.5" stroke="#4a4a4a" stroke-width="1"/>
<line x1="71" y1="485.5" x2="76" y2="485.5" stroke="#5a5a5a" stroke-width="1"/>
<line x1="840" y1="485.5" x2="846" y2="485.5" stroke="#4a4a4a" stroke-width="1"/>
<line x1="71" y1="488.5" x2="76" y2="488.5" stroke="#5a5a5a" stroke-width="1"/>
<line x1="840" y1="488.5" x2="846" y2="488.5" stroke="#4a4a4a" stroke-width="1"/>
<line x1="71" y1="490.5" x2="76" y2="490.5" stroke="#5a5a5a" stroke-width="1"/>
<line x1="840" y1="490.5" x2="846" y2="490.5" stroke="#4a4a4a" stroke-width="1"/>
<line x1="71" y1="493.5" x2="76" y2="493.5" stroke="#5a5a5a" stroke-width="1"/>
<line x1="840" y1="493.5" x2="846" y2="493.5" stroke="#4a4a4a" stroke-width="1"/>
<line x1="71" y1="495.5" x2="76" y2="495.5" stroke="#5a5a5a" stroke-width="1"/>
<line x1="840" y1="495.5" x2="846" y2="495.5" stroke="#4a4a4a" stroke-width="1"/>
<line x1="71" y1="497.5" x2="76" y2="497.5" stroke="#5a5a5a" stroke-width="1"/>
<line x1="840" y1="497.5" x2="846" y2="497.5" stroke="#4a4a4a" stroke-width="1"/>
<line x1="71" y1="500.5" x2="76" y2="500.5" stroke="#5a5a5a" stroke-width="1"/>
<line x1="840" y1="500.5" x2="846" y2="500.5" stroke="#4a4a4a" stroke-width="1"/>
<line x1="71" y1="502.5" x2="76" y2="502.5" stroke="#5a5a5a" stroke-width="1"/>
<line x1="840" y1="502.5" x2="846" y2="502.5" stroke="#4a4a4a" stroke-width="1"/>
<line x1="71" y1="504.5" x2="76" y2="504.5" stroke="#5a5a5a" stroke-width="1"/>
<line x1="840" y1="504.5" x2="846" y2="504.5" stroke="#4a4a4a" stroke-width="1"/>
<line x1="71" y1="507.5" x2="76" y2="507.5" stroke="#5a5a5a" stroke-width="1"/>
<line x1="840" y1="507.5" x2="846" y2="507.5" stroke="#4a4a4a" stroke-width="1"/>
<line x1="71" y1="509.5" x2="76" y2="509.5" stroke="#5a5a5a" stroke-width="1"/>
<line x1="840" y1="509.5" x2="846" y2="509.5" stroke="#4a4a4a" stroke-width="1"/>
<line x1="71" y1="512.5" x2="76" y2="512.5" stroke="#5a5a5a" stroke-width="1"/>
<line x1="840" y1="512.5" x2="846" y2="512.5" stroke="#4a4a4a" stroke-width="1"/>
<line x1="71" y1="514.5" x2="76" y2="514.5" stroke="#5a5a5a" stroke-width="1"/>
<line x1="840" y1="514.5" x2="846" y2="514.5" stroke="#4a4a4a" stroke-width="1"/>
<line x1="71" y1="516.5" x2="76" y2="516.5" stroke="#5a5a5a" stroke-width="1"/>
<line x1="840" y1="516.5" x2="846" y2="516.5" stroke="#4a4a4a" stroke-width="1"/>
<line x1="71" y1="519.5" x2="76" y2="519.5" stroke="#5a5a5a" stroke-width="1"/>
<line x1="840" y1="519.5" x2="846" y2="519.5" stroke="#4a4a4a" stroke-width="1"/>
<line x1="71" y1="521.5" x2="76" y2="521.5" stroke="#5a5a5a" stroke-width="1"/>
<line x1="840" y1="521.5" x2="846" y2="521.5" stroke="#4a4a4a" stroke-width="1"/>
<rect x="71.5" y="393.5" width="775" height="128" fill="none" stroke="#a0a0a0" stroke-width="1"/>
<line x1="71" y1="456" x2="846" y2="456" stroke="#7cf01c" stroke-width="3"/>
<circle cx="525.5" cy="456.5" r="7.5" fill="#ff00ff"/>
</svg>
<div class="ch" style="left:523px;top:450px;font-size:11px;color:#3a0050">6</div>
<div class="ch" style="left:5px;top:384px;width:64px;text-align:right">+18dB</div>
<div class="ch" style="left:5px;top:406px;width:64px;text-align:right">+12dB</div>
<div class="ch" style="left:5px;top:427px;width:64px;text-align:right">+6dB</div>
<div class="ch" style="left:5px;top:448px;width:61px;text-align:right">0dD</div>
<div class="ch" style="left:5px;top:470px;width:61px;text-align:right">&#8211;6dB</div>
<div class="ch" style="left:5px;top:491px;width:61px;text-align:right">&#8211;12dB</div>
<div class="ch" style="left:5px;top:512px;width:61px;text-align:right">&#8211;18dB</div>
<div class="ch" style="left:131px;top:526px">20Hz</div>
<div class="ch" style="left:221px;top:526px">50Hz</div>
<div class="ch" style="left:290px;top:526px">100Hz</div>
<div class="ch" style="left:358px;top:526px">200Hz</div>
<div class="ch" style="left:449px;top:526px">500Hz</div>
<div class="ch" style="left:517px;top:526px">1kHz</div>
<div class="ch" style="left:586px;top:526px">2kHz</div>
<div class="ch" style="left:676px;top:526px">5kHz</div>
<div class="ch" style="left:744px;top:526px">10kHz</div>
<div class="ch" style="left:813px;top:526px">20kHz</div>
<div style="left:18px;top:580px;width:12px;height:12px;background:#fff;border-top:1px solid #808080;border-left:1px solid #808080;border-bottom:1px solid #fff;border-right:1px solid #fff;box-sizing:border-box;box-shadow:inset 1px 1px 0 #9a9a9a, inset -1px -1px 0 #e4e4e4;"></div>
<div class="cj" style="left:35px;top:580px;font-size:11px;color:#000;">当前页面所有参数恢复原始值试听比较</div>
</body></html>
